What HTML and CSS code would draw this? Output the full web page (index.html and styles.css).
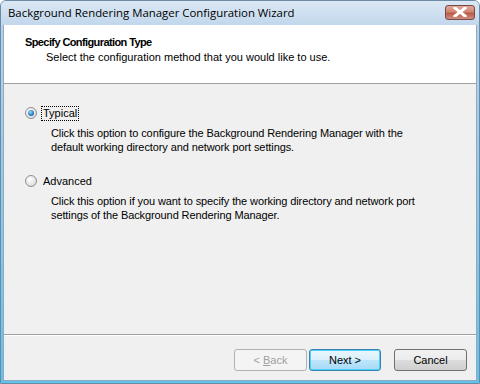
FILE: index.html
```html
<!DOCTYPE html>
<html>
<head>
<meta charset="utf-8">
<link rel="stylesheet" href="styles.css">
</head>
<body>
<div class="window">
  <div class="titlebar">
    <span class="title">Background Rendering Manager Configuration Wizard</span>
    <span class="close"><svg width="14" height="10" viewBox="0 0 14 10"><path d="M2 1 L12 9 M12 1 L2 9" stroke="#fff" stroke-width="3" stroke-linecap="square"/></svg></span>
  </div>
  <div class="client">
    <div class="header">
      <div class="h-title">Specify Configuration Type</div>
      <div class="h-sub">Select the configuration method that you would like to use.</div>
    </div>
    <div class="content">
      <div class="option">
        <div class="opt-row"><span class="radio checked"></span><span class="label focus">Typical</span></div>
        <div class="desc">Click this option to configure the Background Rendering Manager with the<br>default working directory and network port settings.</div>
      </div>
      <div class="option">
        <div class="opt-row"><span class="radio"></span><span class="label">Advanced</span></div>
        <div class="desc">Click this option if you want to specify the working directory and network port<br>settings of the Background Rendering Manager.</div>
      </div>
    </div>
    <div class="footer">
      <div class="sep"></div>
      <div class="buttons">
        <button class="btn disabled">&lt; <u>B</u>ack</button>
        <button class="btn default">Next &gt;</button>
        <button class="btn cancel">Cancel</button>
      </div>
    </div>
  </div>
</div>
</body>
</html>
```
FILE: styles.css
```css
html, body { margin: 0; padding: 0; }
body { width: 480px; height: 384px; overflow: hidden; font-family: "Liberation Sans", Arial, sans-serif; font-size: 11px; color: #000; }
.window {
  width: 480px; height: 384px; box-sizing: border-box;
  background: linear-gradient(#c8dbeb, #b9d1ea 25px, #5fc4ea 384px);
  border: 1px solid #6b8aa5;
  border-radius: 6px 6px 0 0;
  display: flex; flex-direction: column;
  padding: 0 2px 2px 2px;
}
.titlebar {
  height: 24px; display: flex; align-items: center; justify-content: space-between;
  background: linear-gradient(#dbe8f4, #c2d7ec);
  margin: 0 -2px; padding: 0 4px 0 7px;
  border-radius: 5px 5px 0 0;
}
.title { font-family: "Open Sans", "Noto Sans", sans-serif; font-size: 11.4px; color: #000; position: relative; top: -1px; }
.close {
  width: 30px; height: 15px; box-sizing: border-box; margin-top: -2px;
  border: 1px solid #7a4a48; border-radius: 3px;
  background: linear-gradient(#e2a89b, #d08672 45%, #bb5a45 55%, #cf8d80);
  display: flex; align-items: center; justify-content: center;
}
.client { flex: 1; background: #f0f0f0; display: flex; flex-direction: column; border: 1px solid #8fa9c4; border-top: none; }
.header { height: 59px; background: #fff; border-bottom: 1px solid #a0a0a0; box-sizing: border-box; padding: 10px 0 0 21px; }
.h-title { font-weight: bold; line-height: 14px; letter-spacing: -0.6px; }
.h-sub { padding-left: 21px; line-height: 14px; margin-top: 1px; }
.content { flex: 1; padding: 22px 0 0 21px; }
.option { margin-bottom: 20px; }
.opt-row { display: flex; align-items: center; height: 14px; }
.radio {
  width: 12px; height: 12px; border-radius: 50%; box-sizing: border-box;
  border: 1px solid #8e8f8f;
  background: radial-gradient(circle at 40% 35%, #fff, #e4e4e4 60%, #cccccc);
  position: relative; margin-right: 5px;
}
.radio.checked::after {
  content: ""; position: absolute; left: 2px; top: 2px; width: 6px; height: 6px; border-radius: 50%;
  background: radial-gradient(circle at 40% 35%, #8fdcff, #1a6bb0 70%, #0d3c7a);
}
.label { padding: 0 1px; line-height: 13px; }
.label.focus { outline: 1px dotted #000; }
.desc { margin: 6px 0 0 26px; line-height: 14px; letter-spacing: -0.1px; }
.footer { padding-bottom: 9px; }
.sep { height: 0; border-top: 1px solid #a0a0a0; border-bottom: 1px solid #fff; margin: 0 0 13px 0; }
.buttons { display: flex; justify-content: flex-end; padding-right: 9px; }
.btn {
  width: 73px; height: 22px; box-sizing: border-box; font-family: inherit; font-size: 11px;
  border: 1px solid #707070; border-radius: 3px; padding: 0;
  background: linear-gradient(#f2f2f2, #ebebeb 50%, #dddddd 50%, #cfcfcf);
  color: #000;
}
.btn.disabled { color: #a0a0a0; border-color: #adb2b5; background: #f4f4f4; margin-right: 2px; }
.btn.default { border-color: #3c7fb1; background: linear-gradient(#eaf6fd, #d9f0fc 50%, #bee6fd 50%, #a7d9f5); box-shadow: inset 0 0 0 1px #48d4f8; width: 72px; margin-right: 13px; }
```
